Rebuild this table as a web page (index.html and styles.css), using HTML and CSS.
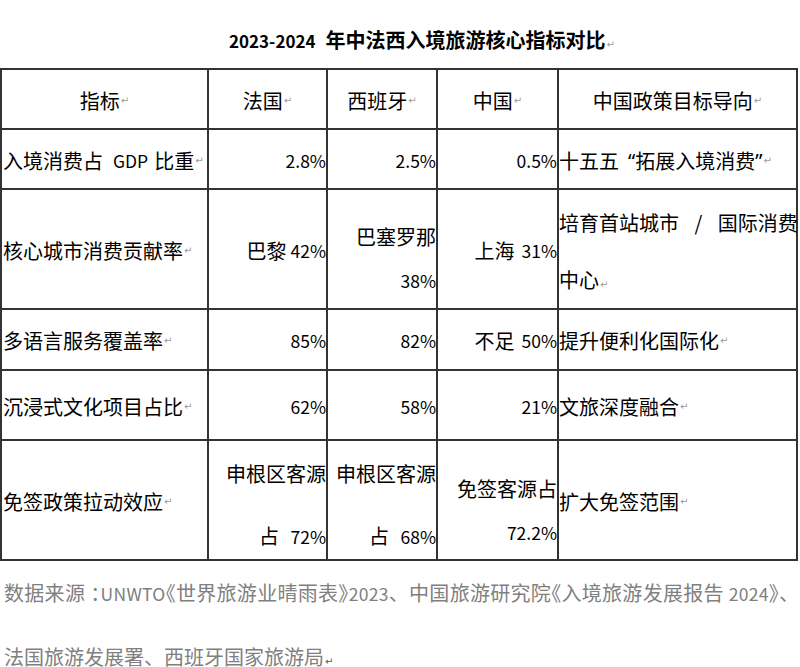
FILE: index.html
```html
<!DOCTYPE html>
<html lang="zh-CN">
<head>
<meta charset="utf-8">
<title>2023-2024 年中法西入境旅游核心指标对比</title>
<link rel="stylesheet" href="styles.css">
</head>
<body>
<div class="page">
  <div class="title"><span class="tn">2023-2024</span>&ensp;年中法西入境旅游核心指标对比<span class="pm">↵</span></div>
  <div class="grid">
    <div class="cell hd">指标<span class="pm">↵</span></div>
    <div class="cell hd">法国<span class="pm">↵</span></div>
    <div class="cell hd">西班牙<span class="pm">↵</span></div>
    <div class="cell hd">中国<span class="pm">↵</span></div>
    <div class="cell hd">中国政策目标导向<span class="pm">↵</span></div>

    <div class="cell lbl">入境消费占 <span class="n gdp">GDP</span> 比重<span class="pm">↵</span></div>
    <div class="cell num"><span class="n">2.8%</span></div>
    <div class="cell num"><span class="n">2.5%</span></div>
    <div class="cell num"><span class="n">0.5%</span></div>
    <div class="cell pol">十五五<span class="q q1">“</span>拓展入境消费<span class="q">”</span><span class="pm">↵</span></div>

    <div class="cell lbl">核心城市消费贡献率<span class="pm">↵</span></div>
    <div class="cell num">巴黎 <span class="n g5">42%</span></div>
    <div class="cell ml num l43a">巴塞罗那<br><span class="n">38%</span></div>
    <div class="cell num">上海 <span class="n g8">31%</span></div>
    <div class="cell ml pol l57">培育首站城市<span class="sl"> / </span>国际消费<br>中心<span class="pm">↵</span></div>

    <div class="cell lbl">多语言服务覆盖率<span class="pm">↵</span></div>
    <div class="cell num"><span class="n">85%</span></div>
    <div class="cell num"><span class="n">82%</span></div>
    <div class="cell num">不足 <span class="n g8">50%</span></div>
    <div class="cell pol">提升便利化国际化<span class="pm">↵</span></div>

    <div class="cell lbl">沉浸式文化项目占比<span class="pm">↵</span></div>
    <div class="cell num"><span class="n">62%</span></div>
    <div class="cell num"><span class="n">58%</span></div>
    <div class="cell num"><span class="n">21%</span></div>
    <div class="cell pol">文旅深度融合<span class="pm">↵</span></div>

    <div class="cell lbl">免签政策拉动效应<span class="pm">↵</span></div>
    <div class="cell ml num l62">申根区客源<br>占 <span class="n g8">72%</span></div>
    <div class="cell ml num l62">申根区客源<br>占 <span class="n g8">68%</span></div>
    <div class="cell ml num l43b">免签客源占<br><span class="n">72.2%</span></div>
    <div class="cell pol">扩大免签范围<span class="pm">↵</span></div>
  </div>
  <div class="note">
    <div class="nl1">数据来源<span class="colon">：</span><span class="n">UNWTO</span>《世界旅游业晴雨表》<span class="n">2023</span><span class="fw">、</span>中国旅游研究院《入境旅游发展报告 <span class="n">2024</span>》、</div>
    <div class="nl2">法国旅游发展署、西班牙国家旅游局<span class="pm dark">↵</span></div>
  </div>
</div>
</body>
</html>
```

FILE: styles.css
```css
html, body {
  margin: 0;
  padding: 0;
  background: #ffffff;
}

body {
  font-family: "Noto Sans CJK SC", "Noto Sans", sans-serif;
  color: #000000;
}

.page {
  width: 800px;
}

.title {
  height: 68px;
  box-sizing: border-box;
  padding: 24px 0 0 229px;
  font-size: 20px;
  font-weight: 700;
  line-height: 32px;
  white-space: nowrap;
}

.tn {
  font-size: 17px;
}

.grid {
  display: grid;
  width: 798px;
  box-sizing: border-box;
  padding: 2px;
  gap: 2px;
  background: #333333;
  grid-template-columns: 205px 117px 108px 119px 237px;
  grid-template-rows: 58px 58px 118px 59px 68px 118px;
}

.cell {
  background: #ffffff;
  display: flex;
  align-items: center;
  box-sizing: border-box;
  padding-top: 3px;
  font-size: 20px;
  line-height: 26px;
  white-space: nowrap;
  min-width: 0;
  min-height: 0;
}

.n {
  font-size: 17.5px;
}

.gdp {
  margin: 0 6px 0 10px;
}

.g5 {
  margin-left: 4px;
}

.g8 {
  margin-left: 7px;
}

.hd {
  justify-content: center;
  padding-top: 4px;
}

.lbl {
  padding-left: 1px;
}

.num {
  justify-content: flex-end;
}

.pol {
  justify-content: flex-start;
}

.ml {
  display: block;
}

.ml.num {
  text-align: right;
}

.l43a {
  line-height: 43px;
  padding-top: 25px;
}

.l43b {
  line-height: 43px;
  padding-top: 26px;
}

.l57 {
  line-height: 57px;
  padding-top: 4px;
}

.l62 {
  line-height: 62px;
  padding-top: 2px;
}

.q {
  font-family: "Noto Sans", sans-serif;
}

.q1 {
  margin-left: 9px;
}

.sl {
  word-spacing: 11px;
}

.pm {
  font-family: "DejaVu Sans", sans-serif;
  font-size: 10px;
  font-weight: 400;
  color: #9a9a9a;
  margin-left: 1px;
}

.pm.dark {
  color: #555555;
}

.note {
  padding-left: 4px;
  font-size: 20px;
  color: #808080;
  white-space: nowrap;
}

.nl1 {
  line-height: 63px;
  letter-spacing: 0.3px;
  font-feature-settings: "halt";
}

.colon {
  margin-left: 5px;
}

.fw {
  font-feature-settings: normal;
}

.nl2 {
  line-height: 20px;
  padding-top: 22px;
}
```
